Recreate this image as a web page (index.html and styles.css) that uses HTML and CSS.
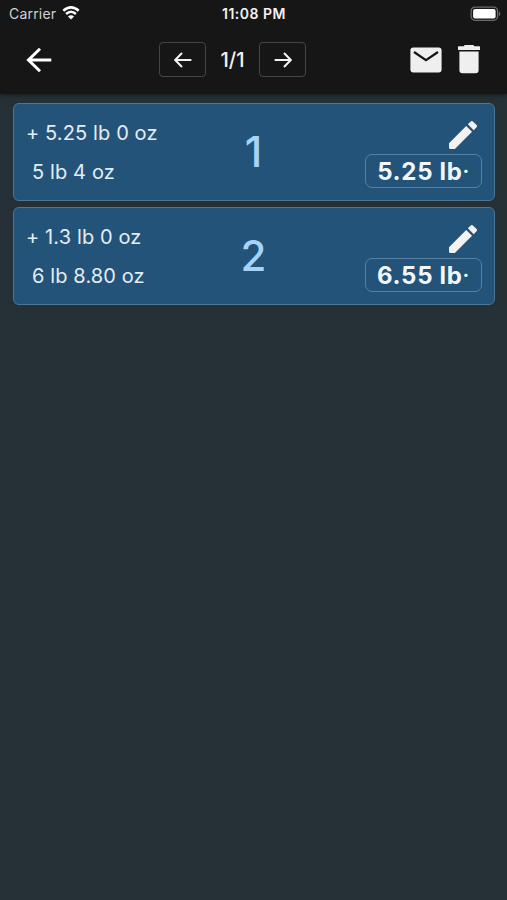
FILE: index.html
```html
<!DOCTYPE html>
<html lang="en">
<head>
  <meta charset="UTF-8" />
  <meta name="viewport" content="width=device-width, initial-scale=1.0"/>
  <title>Weights</title>
  <link rel="stylesheet" href="styles.css">
</head>
<body>
  <header class="top">
    <div class="status">
      <div class="carrier">
        <span>Carrier</span>
        <svg class="wifi" viewBox="0 0 18 14">
          <path d="M1.3 4.8 Q9 -2 16.7 4.8" />
          <path d="M4.1 8 Q9 3.6 13.9 8" />
          <path class="dot" d="M9 13.6 L5.9 10.5 Q9 7.9 12.1 10.5 Z" />
        </svg>
      </div>
      <span class="time">11:08 PM</span>
      <svg class="battery" viewBox="0 0 32 16">
        <rect class="shell" x="1.1" y="1.1" width="26.5" height="13.2" rx="4" />
        <rect class="charge" x="3.1" y="3" width="22.5" height="9.5" rx="2" />
        <path class="tip" d="M29 5.2 Q31.8 7.7 29 10.2 Z" />
      </svg>
    </div>
    <nav class="toolbar">
      <button class="back" aria-label="Back">
        <svg viewBox="0 0 26 26"><path d="M25.3 13H2.5M14 1.8L2.5 13 14 24.2" /></svg>
      </button>
      <div class="pager">
        <button class="page-btn" aria-label="Previous">
          <svg viewBox="0 0 18 16"><path d="M17.4 8H1.4M8 1L1.2 8 8 15" /></svg>
        </button>
        <span class="page">1/1</span>
        <button class="page-btn" aria-label="Next">
          <svg viewBox="0 0 18 16"><path d="M.6 8h16M10 1l6.8 7L10 15" /></svg>
        </button>
      </div>
      <div class="actions">
        <button aria-label="Mail">
          <svg class="mail" viewBox="0 0 32 26">
            <rect x=".4" y=".4" width="31.2" height="25" rx="3" />
            <path d="M4 5l12 8.2L28 5" />
          </svg>
        </button>
        <button aria-label="Delete">
          <svg class="trash" viewBox="0 0 22 29">
            <path d="M0 1.8Q0 1.3.6 1.3H5.6L6.8 0h8.4l1.2 1.3h5q.6 0 .6.5V5H0z" />
            <path d="M1.4 6.4h19.2V25.3q0 3-3 3H4.4q-3 0-3-3z" />
          </svg>
        </button>
      </div>
    </nav>
  </header>

  <main class="list">
    <section class="card">
      <div class="entry">
        <div>+ 5.25 lb 0 oz</div>
        <div class="sum">5 lb 4 oz</div>
      </div>
      <div class="number">1</div>
      <div class="side">
        <svg class="pencil" viewBox="3 3 18 18">
          <path d="M3 17.25V20q0 1 1 1h2.75L17.81 9.94l-3.75-3.75L3 17.25zM20.71 7.04c.39-.39.39-1.02 0-1.41l-2.34-2.34c-.39-.39-1.02-.39-1.41 0l-1.83 1.83 3.75 3.75 1.83-1.83z" />
        </svg>
        <div class="total">5.25 lb<span class="mark">·</span></div>
      </div>
    </section>
    <section class="card">
      <div class="entry">
        <div>+ 1.3 lb 0 oz</div>
        <div class="sum">6 lb 8.80 oz</div>
      </div>
      <div class="number">2</div>
      <div class="side">
        <svg class="pencil" viewBox="3 3 18 18">
          <path d="M3 17.25V20q0 1 1 1h2.75L17.81 9.94l-3.75-3.75L3 17.25zM20.71 7.04c.39-.39.39-1.02 0-1.41l-2.34-2.34c-.39-.39-1.02-.39-1.41 0l-1.83 1.83 3.75 3.75 1.83-1.83z" />
        </svg>
        <div class="total">6.55 lb<span class="mark">·</span></div>
      </div>
    </section>
  </main>
</body>
</html>
```
FILE: styles.css
```css
* { box-sizing: border-box; }
body { margin: 0; min-height: 100vh; background: #253137; color: #e3edf5; font-family: Inter, Roboto, sans-serif; }
button { display: flex; align-items: center; justify-content: center; padding: 0; border: none; background: none; color: inherit; cursor: pointer; }
svg { display: block; }

.top { height: 94px; background: #161616; color: #f2f2f2; box-shadow: 0 1px 4px rgba(0,0,0,0.5); }
.status { display: grid; grid-template-columns: 1fr auto 1fr; align-items: center; height: 27px; padding: 0 5px 0 6px; }
.carrier { display: flex; align-items: center; gap: 6px; padding-left: 3px; font-size: 14px; letter-spacing: 0.2px; color: #d2d2d2; }
.wifi { width: 18px; height: 14px; margin-top: -1px; fill: none; stroke: #fff; stroke-width: 2.5; }
.wifi .dot { fill: #fff; stroke: none; }
.time { font-size: 14px; font-weight: 600; letter-spacing: 0.5px; }
.battery { width: 32px; height: 16px; justify-self: end; }
.shell { fill: none; stroke: #6b6b6b; stroke-width: 1.3; }
.charge { fill: #fff; }
.tip { fill: #6b6b6b; }

.toolbar { display: flex; align-items: center; height: 65px; padding: 0 27px 0 26px; }
.back svg { width: 26px; height: 26px; fill: none; stroke: #fff; stroke-width: 3; }
.pager { display: flex; align-items: center; margin-left: 107px; }
.page-btn { width: 47px; height: 35px; border: 1px solid #444; border-radius: 4px; }
.page-btn svg { width: 18px; height: 16px; fill: none; stroke: #f2f2f2; stroke-width: 2; }
.page { width: 53px; text-align: center; font-size: 20px; font-weight: 500; }
.actions { display: flex; align-items: center; gap: 16px; margin-left: auto; }
.mail { width: 32px; height: 26px; fill: #efefef; }
.mail path { fill: none; stroke: #161616; stroke-width: 2.2; }
.trash { width: 22px; height: 29px; fill: #efefef; }

.list { display: flex; flex-direction: column; gap: 6px; padding: 9px 12px 0 13px; }
.card { display: grid; grid-template-columns: 1fr auto 1fr; height: 98px; padding: 0 13px 0 12px; background: #235378; border: 1px solid #4d7595; border-radius: 6px; }
.entry { padding-top: 10px; font-size: 20px; line-height: 39px; letter-spacing: 0.12px; white-space: nowrap; }
.sum { padding-left: 6px; }
.number { font-size: 42px; font-weight: 500; line-height: 96px; color: #a6d3f7; }
.side { display: flex; flex-direction: column; align-items: flex-end; padding-top: 17px; }
.pencil { width: 28px; height: 28px; margin-right: 4px; fill: #f2f2f2; }
.total { display: flex; align-items: center; height: 34px; margin: 5px -1px 0 0; padding: 0 11px 0 11px; border: 1px solid #55809f; border-radius: 7px; font-size: 24px; font-weight: 700; color: #f0f6fa; letter-spacing: 0.7px; white-space: nowrap; }
.mark { font-size: 20px; }
```
